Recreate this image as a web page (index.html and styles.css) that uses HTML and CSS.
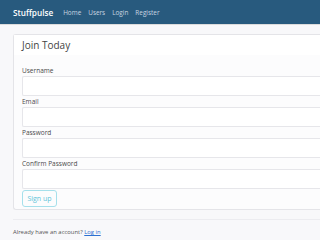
FILE: index.html
```html
<!DOCTYPE html>
<html lang="en">
<head>
<meta charset="utf-8">
<title>Stuffpulse - Register</title>
<link rel="stylesheet" href="styles.css">
</head>
<body>
<nav class="navbar">
  <a class="brand" href="#">Stuffpulse</a>
  <div class="nav-links">
    <a href="#">Home</a>
    <a href="#">Users</a>
    <a href="#">Login</a>
    <a href="#">Register</a>
  </div>
</nav>
<main class="page">
  <section class="card">
    <div class="card-header"><h1>Join Today</h1></div>
    <form class="card-body">
      <div class="field"><label for="u">Username</label><input id="u" type="text"></div>
      <div class="field"><label for="e">Email</label><input id="e" type="email"></div>
      <div class="field"><label for="p">Password</label><input id="p" type="password"></div>
      <div class="field"><label for="c">Confirm Password</label><input id="c" type="password"></div>
      <button class="btn" type="button">Sign up</button>
    </form>
  </section>
  <div class="note">Already have an account? <a href="#">Log in</a></div>
</main>
</body>
</html>
```
FILE: styles.css
```css
html, body {
  margin: 0;
  padding: 0;
  overflow: hidden;
}
body {
  width: 320px;
  height: 240px;
  background: #f8f8fa;
  font-family: "Open Sans", "Liberation Sans", sans-serif;
  color: #444;
}
.navbar {
  height: 24px;
  background: #285a7e;
  border-bottom: 1px solid #dcdcdc;
  display: flex;
  align-items: center;
  padding-left: 13px;
}
.brand {
  color: #fff;
  font-weight: 600;
  font-size: 8.2px;
  text-decoration: none;
  margin-right: 10px;
}
.nav-links {
  display: flex;
  gap: 7px;
}
.nav-links a {
  color: #c9d5e0;
  font-size: 6.4px;
  text-decoration: none;
}
.page {
  padding: 9px 0 0 13px;
}
.card {
  background: #fcfcfd;
  border: 1px solid #e4e4e8;
  border-right: none;
  border-radius: 3px 0 0 3px;
}
.card-header {
  height: 20px;
  background: #fff;
  padding-left: 8px;
  display: flex;
  align-items: center;
}
.card-header h1 {
  margin: 0;
  font-size: 10px;
  font-weight: 400;
  color: #444;
}
.card-body {
  padding: 11px 0 2px 8px;
  margin: 0;
}
.field {
  margin-bottom: 1px;
}
.field label {
  display: block;
  height: 10px;
  line-height: 10px;
  font-size: 6.5px;
  color: #4a4a4a;
}
.field input {
  display: block;
  box-sizing: border-box;
  width: 100%;
  height: 20px;
  margin: 0;
  border: 1px solid #e6e6ea;
  border-right: none;
  border-radius: 2px 0 0 2px;
  background: #fff;
}
.btn {
  display: block;
  box-sizing: border-box;
  width: 35px;
  height: 17px;
  padding: 0;
  background: transparent;
  border: 1px solid #a6e0eb;
  border-radius: 3px;
  color: #62c4d9;
  font-family: "Open Sans", "Liberation Sans", sans-serif;
  font-size: 7px;
}
.note {
  margin-top: 9px;
  border-top: 1px solid #ececf0;
  padding-top: 8px;
  font-size: 5.9px;
  line-height: 9px;
  color: #555;
}
.note a {
  color: #2c6fd1;
}
```
